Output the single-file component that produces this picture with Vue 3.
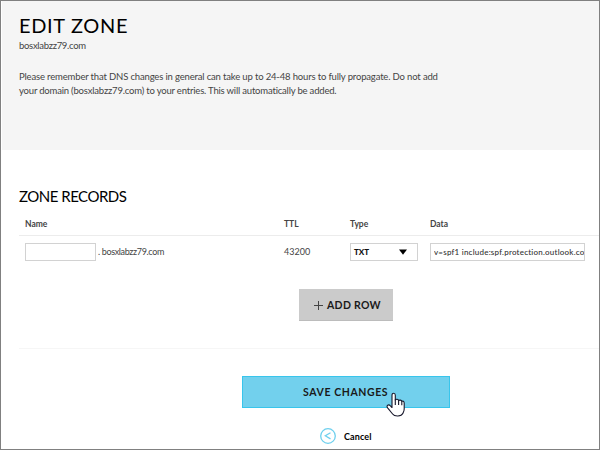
<script setup>
import { ref } from 'vue'

const domain = 'bosxlabzz79.com'
const host = ref('')
const data = ref('v=spf1 include:spf.protection.outlook.com -all')
</script>

<template>
  <main class="page">
    <header class="intro">
      <h1>EDIT ZONE</h1>
      <p class="domain">{{ domain }}</p>
      <p class="note n1">Please remember that DNS changes in general can take up to 24-48 hours to fully propagate. Do not add</p>
      <p class="note n2">your domain ({{ domain }}) to your entries. This will automatically be added.</p>
    </header>

    <section class="records">
      <h2>ZONE RECORDS</h2>
      <div class="grid head">
        <span>Name</span><span>TTL</span><span>Type</span><span>Data</span>
      </div>
      <div class="grid row">
        <div class="name">
          <input v-model="host" class="box host" aria-label="Name" />
          <span class="suffix">. {{ domain }}</span>
        </div>
        <span class="ttl">43200</span>
        <div class="box select">
          <span>TXT</span>
          <svg width="8" height="6" viewBox="0 0 8 6"><path d="M0 .5h8L4 5.7z" fill="#000" /></svg>
        </div>
        <input v-model="data" class="box data" aria-label="Data" />
      </div>
      <button class="add">
        <svg width="9" height="9" viewBox="0 0 9 9"><path d="M4.5 0v9M0 4.5h9" stroke="#444" stroke-width="1" /></svg>
        <span>ADD ROW</span>
      </button>
    </section>

    <hr class="rule" />

    <footer class="actions">
      <button class="save">
        <span>SAVE CHANGES</span>
        <svg class="hand" width="20" height="26" viewBox="0 0 20 26">
          <path
            d="M6 15.5V3.2C6 .6 9.3.6 9.3 3.2V8C10 6.9 12.3 7 12.6 8.7C13.4 7.7 15.4 8 15.8 9.4C16.8 8.7 18.2 9.3 18.2 11.2V17C18.2 19 17.3 20.4 16.8 21.6C15.4 24.6 8.5 24.8 6.6 22L1.6 15.9C-.2 13.5 2.7 11.9 4.2 13.6Z"
            fill="#fff" stroke="#17172b" stroke-width="1.1" stroke-linejoin="round"
          />
          <path d="M9.3 7.5v5.5M12.6 8.5v4.5M15.8 9.2v4" fill="none" stroke="#17172b" stroke-width="1.1" />
        </svg>
      </button>
      <a class="cancel">
        <svg width="16" height="16" viewBox="0 0 16 16" fill="none" stroke="#6fd0ee">
          <circle cx="8" cy="8" r="7.3" stroke-width="1.3" />
          <path d="M10.5 4.7L5.3 7.8l5.2 3.1" stroke-width="1.3" />
        </svg>
        <span>Cancel</span>
      </a>
    </footer>
  </main>
</template>

<style>
body {
  margin: 0;
}
</style>

<style scoped>
* {
  box-sizing: border-box;
}
.page {
  width: 600px;
  height: 450px;
  overflow: hidden;
  border: 1px solid #808080;
  background: #fff;
  color: #444;
  font-family: Lato, sans-serif;
  font-size: 9px;
}
h1,
h2,
p {
  margin: 0;
  font-weight: 400;
  white-space: nowrap;
}
.intro {
  height: 149px;
  margin-left: 1px;
  padding: 12px 0 0 17px;
  background: #f5f5f5;
}
h1 {
  height: 26px;
  font-size: 20px;
  line-height: 25px;
  letter-spacing: 0.65px;
  color: #000;
}
.domain {
  height: 13px;
  font-size: 9.5px;
  line-height: 13px;
  letter-spacing: -0.3px;
}
.note {
  font-size: 9.5px;
  line-height: 14px;
}
.n1 {
  margin-top: 18px;
  letter-spacing: -0.16px;
}
.n2 {
  letter-spacing: -0.19px;
}
.records {
  height: 198px;
  padding-left: 18px;
}
.rule {
  height: 1px;
  margin: 0 0 0 18px;
  border: 0;
  background: #f6f6f6;
}
h2 {
  padding-top: 36px;
  font-size: 15px;
  line-height: 20px;
  letter-spacing: -0.5px;
  color: #000;
}
.grid {
  display: grid;
  grid-template-columns: 259px 66px 80px 156px;
  padding-left: 6px;
  align-items: center;
}
.head {
  height: 30px;
  padding-top: 6px;
  border-bottom: 1px solid #ececec;
  font-size: 8.5px;
  font-weight: 700;
}
.row {
  height: 31px;
}
.name {
  display: flex;
  align-items: center;
  gap: 2px;
}
.box {
  height: 18px;
  border: 1px solid #d2d2d2;
  background: #fff;
  outline: 0;
  font-family: inherit;
  color: #333;
}
.host {
  width: 71px;
}
.suffix {
  font-size: 9px;
  letter-spacing: -0.35px;
}
.ttl {
  font-size: 9px;
}
.select {
  display: flex;
  width: 68px;
  align-items: center;
  justify-content: space-between;
  padding: 0 10px 0 3px;
  font-size: 8px;
  font-weight: 900;
  color: #111;
}
.data {
  width: 155px;
  padding: 0 0 0 3px;
  font-size: 8px;
  font-weight: 500;
  letter-spacing: 0.22px;
}
.add {
  display: flex;
  width: 94px;
  height: 32px;
  margin: 22px 0 0 280px;
  padding: 0 0 0 15px;
  align-items: center;
  gap: 4px;
  border: 0;
  border-bottom: 1px solid #bcbcbc;
  background: #cbcbcb;
  color: #1a1a1a;
  font: 700 10.5px Lato, sans-serif;
  letter-spacing: 0.3px;
  white-space: nowrap;
}
.add svg {
  margin-top: 2px;
}
.actions {
  display: flex;
  flex-direction: column;
  padding: 27px 0 0 241px;
}
.save {
  position: relative;
  width: 208px;
  height: 32px;
  padding: 0 0 0 60px;
  border: 1px solid #38c5ec;
  background: #72d0ed;
  color: #1a1a1a;
  text-align: left;
  font: 700 10.5px Lato, sans-serif;
  letter-spacing: 0.6px;
  white-space: nowrap;
}
.hand {
  position: absolute;
  left: 143px;
  top: 15px;
}
.cancel {
  display: flex;
  margin: 20px 0 0 78px;
  align-items: center;
  gap: 8px;
  color: #000;
  font-size: 9px;
  font-weight: 700;
  letter-spacing: 0.1px;
}
</style>
